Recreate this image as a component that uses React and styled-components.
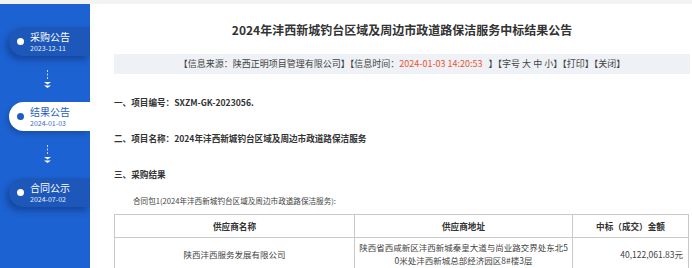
import React from 'react'
import styled, { createGlobalStyle } from 'styled-components'

const GlobalStyle = createGlobalStyle`
  body {
    margin: 0;
    background: #f3f3f3;
    font-family: "Noto Sans CJK SC", "Liberation Sans", sans-serif;
    color: #333;
  }
`

const Page = styled.div`
  display: flex;
  padding-top: 4px;
  height: 264px;
  overflow: hidden;
`

const Sidebar = styled.div`
  width: 90px;
  flex-shrink: 0;
  background: #1d62d2;
  display: flex;
  flex-direction: column;
  padding-top: 23px;
  box-sizing: border-box;
`

const Pill = styled.div`
  margin-left: 9px;
  height: 29px;
  border-radius: 15px 0 0 15px;
  display: flex;
  align-items: center;
  gap: 6px;
  padding-left: 8px;
  background: ${(p) => (p.active ? '#fff' : '#1c57b9')};
  box-shadow: ${(p) => (p.active ? '-2px 3px 5px rgba(0,0,0,0.18)' : '-3px 4px 6px rgba(10,40,100,0.45)')};
  color: ${(p) => (p.active ? '#1d5cc4' : '#fff')};
`

const Dot = styled.span`
  width: 7px;
  height: 7px;
  border-radius: 50%;
  background: ${(p) => (p.active ? '#1d5cc4' : '#fff')};
`

const PillText = styled.div`
  display: flex;
  flex-direction: column;
`

const PillTitle = styled.span`
  font-size: 10px;
  line-height: 12px;
`

const PillDate = styled.span`
  font-size: 7px;
  line-height: 10px;
  opacity: 0.9;
`

const ArrowBox = styled.div`
  height: ${(p) => p.h}px;
  display: flex;
  justify-content: center;
  align-items: center;
  padding-left: 4px;
`

const Main = styled.div`
  flex: 1;
  background: #fff;
  padding: 0 2px 0 24px;
  overflow: hidden;
`

const Title = styled.h1`
  margin: 17px 0 0;
  text-align: center;
  font-size: 12px;
  line-height: 18px;
  font-weight: bold;
  color: #333;
`

const InfoBar = styled.div`
  margin-top: 15px;
  height: 20px;
  line-height: 20px;
  background: #eef1f5;
  text-align: center;
  font-size: 9px;
  color: #444;
  white-space: nowrap;
`

const Red = styled.span`
  color: #f0532f;
`

const Section = styled.div`
  font-size: 8.6px;
  line-height: 12px;
  font-weight: bold;
  color: #333;
  margin-top: ${(p) => p.mt}px;
`

const Para = styled.div`
  font-size: 7.6px;
  line-height: 12px;
  color: #444;
  margin-top: 15px;
  padding-left: 19px;
`

const Table = styled.table`
  margin-top: 7px;
  width: 575px;
  border-collapse: collapse;
  font-size: 8.5px;
  color: #444;
  table-layout: fixed;

  th, td {
    border: 1px solid #c9c9c9;
    text-align: center;
    padding: 3px 3px;
  }

  th {
    height: 16px;
    font-size: 8.6px;
    font-weight: bold;
    color: #333;
  }

  td {
    line-height: 13px;
    word-break: break-all;
  }
`

const Money = styled.td`
  && {
    text-align: right;
    padding-right: 5px;
  }
`

function Arrow() {
  return (
    <svg width="9" height="19" viewBox="0 0 9 19">
      <g stroke="rgba(255,255,255,0.75)" strokeWidth="1" fill="none">
        <line x1="4.5" y1="0" x2="4.5" y2="10" strokeDasharray="2 1.5" />
      </g>
      <path d="M1 12 L8 12 L4.5 14.5 Z" fill="#fff" />
      <path d="M1 15.5 L8 15.5 L4.5 18 Z" fill="#fff" />
    </svg>
  )
}

function Step({ title, date, active }) {
  return (
    <Pill active={active}>
      <Dot active={active} />
      <PillText>
        <PillTitle>{title}</PillTitle>
        <PillDate>{date}</PillDate>
      </PillText>
    </Pill>
  )
}

export default function App() {
  return (
    <>
      <GlobalStyle />
      <Page>
        <Sidebar>
          <Step title="采购公告" date="2023-12-11" />
          <ArrowBox h={46}><Arrow /></ArrowBox>
          <Step title="结果公告" date="2024-01-03" active />
          <ArrowBox h={47}><Arrow /></ArrowBox>
          <Step title="合同公示" date="2024-07-02" />
        </Sidebar>
        <Main>
          <Title>2024年沣西新城钓台区域及周边市政道路保洁服务中标结果公告</Title>
          <InfoBar>
            【信息来源：陕西正明项目管理有限公司】【信息时间：<Red>2024-01-03 14:20:53</Red>&nbsp;&nbsp;&nbsp;】【字号 大 中 小】【打印】【关闭】
          </InfoBar>
          <Section mt={22}>一、项目编号：SXZM-GK-2023056.</Section>
          <Section mt={24}>二、项目名称：2024年沣西新城钓台区域及周边市政道路保洁服务</Section>
          <Section mt={24}>三、采购结果</Section>
          <Para>合同包1(2024年沣西新城钓台区域及周边市政道路保洁服务):</Para>
          <Table>
            <colgroup>
              <col style={{ width: 240 }} />
              <col style={{ width: 218 }} />
              <col />
            </colgroup>
            <thead>
              <tr>
                <th>供应商名称</th>
                <th>供应商地址</th>
                <th>中标（成交）金额</th>
              </tr>
            </thead>
            <tbody>
              <tr>
                <td>陕西沣西服务发展有限公司</td>
                <td>陕西省西咸新区沣西新城秦皇大道与尚业路交界处东北50米处沣西新城总部经济园区8#楼3层</td>
                <Money>40,122,061.83元</Money>
              </tr>
            </tbody>
          </Table>
        </Main>
      </Page>
    </>
  )
}
